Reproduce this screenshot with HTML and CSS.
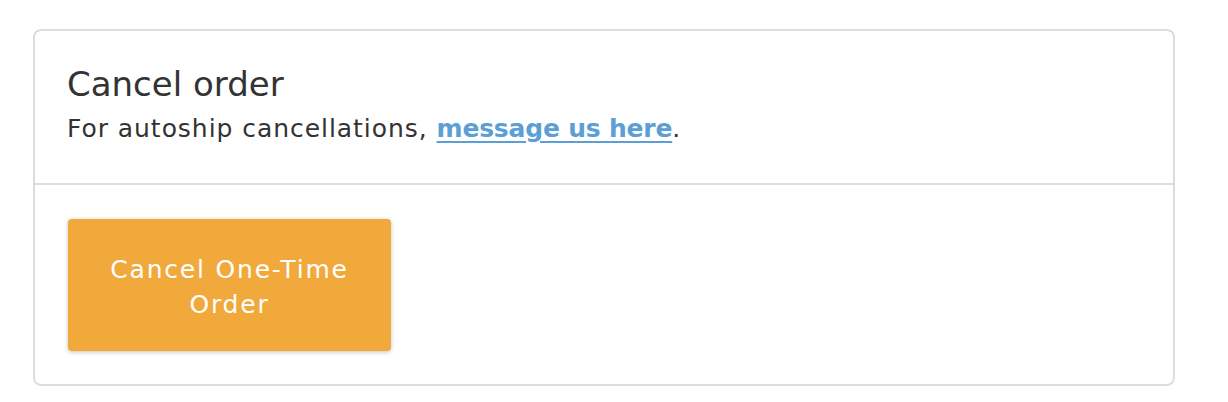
FILE: index.html
```html
<!DOCTYPE html>
<html lang="en">
<head>
<meta charset="utf-8">
<title>Cancel order</title>
<link rel="stylesheet" href="styles.css">
</head>
<body>
<section class="card">
  <header class="card-head">
    <h2 class="title">Cancel order</h2>
    <p class="subtitle">For autoship cancellations, <a class="link" href="#">message us here</a>.</p>
  </header>
  <div class="card-body">
    <button class="cancel-btn" type="button">Cancel One-Time<br>Order</button>
  </div>
</section>
</body>
</html>
```
FILE: styles.css
```css
html, body {
  margin: 0;
  padding: 0;
  background: #fff;
}
body {
  padding: 29px 53px 0 33px;
  font-family: "DejaVu Sans", "Liberation Sans", sans-serif;
  color: #333;
}
.card {
  border: 2px solid #dddddd;
  border-radius: 8px;
  box-sizing: border-box;
  height: 357px;
}
.card-head {
  padding: 33px 32px 0 32px;
  height: 154px;
  box-sizing: border-box;
  border-bottom: 2px solid #dddddd;
}
.title {
  margin: 0;
  font-size: 34px;
  font-weight: normal;
  line-height: 40px;
  color: #333;
}
.subtitle {
  margin: 9px 0 0 0;
  font-size: 25px;
  letter-spacing: 0.95px;
  line-height: 32px;
  color: #333;
}
.link {
  color: #5b9fd6;
  font-weight: bold;
  letter-spacing: -0.2px;
  text-decoration: underline;
  text-decoration-thickness: 2px;
  text-underline-offset: 4px;
}
.card-body {
  padding: 34px 32px;
}
.cancel-btn {
  width: 323px;
  height: 132px;
  background: #f2a93c;
  border: none;
  border-radius: 4px;
  box-shadow: 0 1px 4px rgba(0,0,0,0.25);
  color: #fff;
  font-family: "DejaVu Sans", "Liberation Sans", sans-serif;
  font-weight: normal;
  font-size: 25px;
  letter-spacing: 1.8px;
  line-height: 35px;
  padding: 4px 0 0 0;
  margin-left: 1px;
}
```
